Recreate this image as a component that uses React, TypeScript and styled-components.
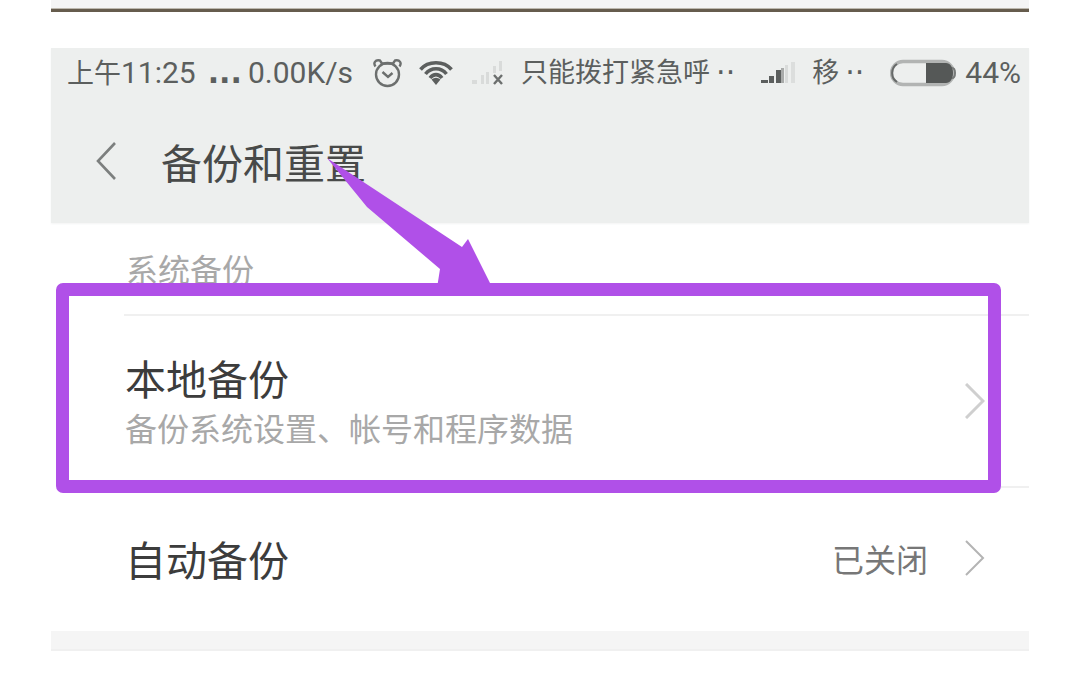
import React from "react";
import styled, { createGlobalStyle } from "styled-components";

const latinFirst = `Roboto, "Noto Sans CJK SC", sans-serif`;
const cjkFirst = `"Noto Sans CJK SC", Roboto, sans-serif`;
const purple = "#b050e8";

const GlobalStyle = createGlobalStyle`
  * { box-sizing: border-box; }
  body { margin: 0; background: #fff; font-family: ${cjkFirst}; }
  h1, h2, p { margin: 0; font-weight: 400; }
  button { margin: 0; border: 0; background: none; font: inherit; color: inherit; cursor: pointer; }
  svg { display: block; flex: none; }
`;

const Page = styled.main`
  padding: 0 51px 24px;
`;

const PreviousEdge = styled.div`
  height: 12px;
  margin-bottom: 36px;
  background: #f4f4f4;
  border-bottom: 3px solid #665c4d;
  box-shadow: inset 0 -1px #bdb8ae;
`;

const Header = styled.header`
  background: #edefee;
  box-shadow: 0 1px 2px #f3f4f4;
`;

const StatusBar = styled.div`
  display: flex;
  align-items: center;
  height: 50px;
  padding: 0 8px 0 16px;
  color: #5c5f5e;
  font-family: ${latinFirst};
  font-size: 30px;
  line-height: 50px;
  white-space: nowrap;
`;

const StatusGroup = styled.div<{ $gap: number; $start?: string }>`
  display: flex;
  align-items: center;
  gap: ${(p) => p.$gap}px;
  margin-left: ${(p) => p.$start ?? "0"};
`;

const SmallText = styled.span`
  font-size: 27px;
`;

const Dots = styled.span<{ $bold?: boolean }>`
  font-family: "DejaVu Sans", sans-serif;
  font-size: 30px;
  font-weight: ${(p) => (p.$bold ? 700 : 400)};
`;

const TitleBar = styled.div`
  display: flex;
  align-items: center;
  gap: 44px;
  height: 125px;
  padding: 0 44px;
`;

const BackButton = styled.button`
  display: flex;
  padding: 0;
  color: #7c7f7e;
`;

const Title = styled.h1`
  color: #484a49;
  font-size: 41px;
  line-height: 60px;
`;

const Section = styled.section`
  position: relative;
`;

const SectionLabel = styled.h2`
  height: 93px;
  margin-left: 73px;
  padding: 21px 0 0 2px;
  border-bottom: 2px solid #f0f0f0;
  color: #a8a8a8;
  font-size: 32px;
  line-height: 48px;
`;

const Row = styled.button<{ $height: number; $divided?: boolean }>`
  display: flex;
  align-items: center;
  width: calc(100% - 73px);
  height: ${(p) => p.$height}px;
  margin-left: 73px;
  padding: 0 44px 0 1px;
  border-bottom: ${(p) => (p.$divided ? "2px solid #f0f0f0" : "4px solid transparent")};
  text-align: left;
`;

const RowText = styled.span`
  display: flex;
  flex: 1;
  flex-direction: column;
`;

const RowTitle = styled.span`
  color: #3c3c3c;
  font-size: 41px;
  line-height: 52px;
`;

const RowNote = styled.span`
  color: #a8a8a8;
  font-size: 32px;
  line-height: 48px;
`;

const RowValue = styled.span`
  margin-right: 37px;
  color: #777;
  font-size: 32px;
  line-height: 48px;
`;

const SectionGap = styled.div`
  height: 20px;
  background: #f5f5f5;
  border-bottom: 2px solid #f0f0f0;
`;

const Highlight = styled.div`
  position: absolute;
  top: 60px;
  left: 5px;
  right: 28px;
  height: 210px;
  border: 13px solid ${purple};
  border-radius: 7px;
  pointer-events: none;
`;

const Arrow = styled.svg`
  position: absolute;
  top: -65px;
  left: 276px;
  pointer-events: none;
`;

function AlarmIcon() {
  return (
    <svg width="30" height="30" viewBox="0 0 30 30" fill="none" stroke="#6c6f6e" strokeWidth="2.4">
      <circle cx="14.500" cy="16.500" r="11.500" />
      <path d="M9.500 14l5.500 5 4.500-4" />
      <path d="M2.500 8.500C0 5 2 1.500 7 2.500l2 3h11l2-3c5-1 7 2.500 4.500 6" />
    </svg>
  );
}

function WifiIcon() {
  return (
    <svg width="34" height="28" viewBox="0 0 34 28" fill="none" stroke="#5c5f5e" strokeWidth="3.6">
      <path d="M1.500 10.500C9 1.500 25 1.500 32.500 10.500" />
      <path d="M6.500 15C12 8 22 8 27.500 15" />
      <path d="M11 19C14.500 14.500 19.500 14.500 23 19" />
      <path d="M12.500 20.500Q17 17 21.500 20.500L17 26z" fill="#5c5f5e" stroke="none" />
    </svg>
  );
}

function NoSignalIcon() {
  return (
    <svg width="34" height="26" viewBox="0 0 34 26">
      <g fill="#d9dbda">
        <rect x="1" y="20" width="5" height="4" />
        <rect x="10" y="15" width="3" height="9" />
        <rect x="15" y="12" width="3" height="12" />
        <rect x="22" y="6" width="3" height="7" />
        <rect x="28" y="1" width="3" height="10" />
      </g>
      <path d="M23 15l8 9M31 15l-8 9" stroke="#6c6f6e" strokeWidth="2.4" />
    </svg>
  );
}

function SignalIcon() {
  return (
    <svg width="35" height="24" viewBox="0 0 35 24">
      <g fill="#5c5f5e">
        <rect x="0" y="19" width="7" height="3" />
        <rect x="8" y="15" width="5" height="7" />
        <rect x="15" y="9" width="5" height="13" />
      </g>
      <rect x="20" y="7" width="3" height="15" fill="#a9abaa" />
      <rect x="24" y="4" width="3" height="18" fill="#d9dbda" />
      <rect x="30" y="1" width="4" height="21" fill="#dcdedd" />
    </svg>
  );
}

function BatteryIcon() {
  return (
    <svg width="67" height="28" viewBox="0 0 67 28">
      <rect x="1.500" y="2.500" width="62" height="23" rx="11.500" fill="none" stroke="#b2b4b3" strokeWidth="3.4" />
      <path d="M7 5C.5 9 .5 19 7 23" fill="none" stroke="#666968" strokeWidth="2" />
      <path d="M36 4h20c4 0 7 4 7 10s-3 10-7 10H36z" fill="#555857" />
      <path d="M62 9c2 0 3 2 3 5s-1 5-3 5" fill="none" stroke="#777a79" strokeWidth="2" />
    </svg>
  );
}

function Chevron({ color, width }: { color: string; width: number }) {
  return (
    <svg width="20" height="36" viewBox="0 0 20 36" fill="none" stroke={color} strokeWidth={width}>
      <path d="M1 1l17 17L1 35" />
    </svg>
  );
}

export default function App() {
  return (
    <Page>
      <GlobalStyle />
      <PreviousEdge />
      <Header>
        <StatusBar>
          <StatusGroup $gap={12}>
            <span>
              <SmallText>上午</SmallText>11:25
            </span>
            <StatusGroup $gap={6}>
              <Dots $bold>...</Dots>
              <span>0.00K/s</span>
            </StatusGroup>
          </StatusGroup>
          <StatusGroup $gap={16} $start="20px">
            <AlarmIcon />
            <WifiIcon />
          </StatusGroup>
          <StatusGroup $gap={16} $start="18px">
            <NoSignalIcon />
            <StatusGroup $gap={6}>
              <SmallText>只能拨打紧急呼</SmallText>
              <Dots>··</Dots>
            </StatusGroup>
          </StatusGroup>
          <StatusGroup $gap={16} $start="auto">
            <SignalIcon />
            <StatusGroup $gap={6}>
              <SmallText>移</SmallText>
              <Dots>··</Dots>
            </StatusGroup>
          </StatusGroup>
          <StatusGroup $gap={8} $start="auto">
            <BatteryIcon />
            <span>44%</span>
          </StatusGroup>
        </StatusBar>
        <TitleBar>
          <BackButton aria-label="返回">
            <svg width="22" height="38" viewBox="0 0 22 38" fill="none" stroke="currentColor" strokeWidth="2.600">
              <path d="M20 1L3 19l17 18" />
            </svg>
          </BackButton>
          <Title>备份和重置</Title>
        </TitleBar>
      </Header>
      <Section>
        <SectionLabel>系统备份</SectionLabel>
        <Row $height={172} $divided>
          <RowText>
            <RowTitle>本地备份</RowTitle>
            <RowNote>备份系统设置、帐号和程序数据</RowNote>
          </RowText>
          <Chevron color="#cfcfcf" width={3} />
        </Row>
        <Row $height={143}>
          <RowText>
            <RowTitle>自动备份</RowTitle>
          </RowText>
          <RowValue>已关闭</RowValue>
          <Chevron color="#b4b4b4" width={2} />
        </Row>
        <Highlight />
        <Arrow width="165" height="130" viewBox="0 0 165 130" aria-hidden="true">
          <path d="M0 0L135 89l6-8 23 46v3h-54l3-19L40 49z" fill={purple} />
        </Arrow>
      </Section>
      <SectionGap />
    </Page>
  );
}
